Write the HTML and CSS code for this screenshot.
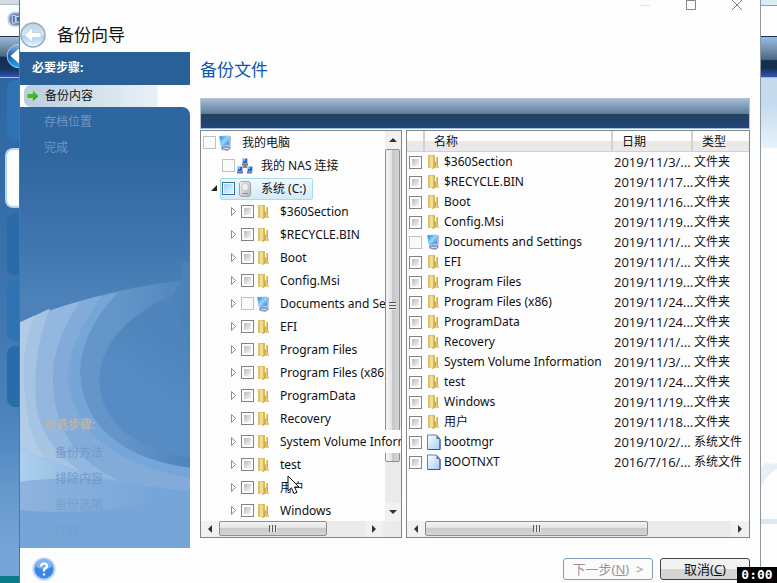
FILE: index.html
```html
<!DOCTYPE html>
<html lang="zh-CN">
<head>
<meta charset="utf-8">
<title>备份向导</title>
<link rel="stylesheet" href="styles.css">
</head>
<body>
<svg class="sprites" aria-hidden="true">
  <defs>
    <linearGradient id="paper" x1="0" y1="0" x2="1" y2="1"><stop offset="0" stop-color="#fff"/><stop offset="1" stop-color="#a4ccf8"/></linearGradient>
    <linearGradient id="screen" x1="0" y1="0" x2="1" y2="1"><stop offset="0" stop-color="#2d78dc"/><stop offset=".5" stop-color="#8fdcff"/><stop offset="1" stop-color="#2d6fdb"/></linearGradient>
    <linearGradient id="metal" x1="0" x2="1" y2="1"><stop offset="0" stop-color="#fff"/><stop offset="1" stop-color="#aeb0b2"/></linearGradient>
    <linearGradient id="glass" x2="0" y2="1"><stop offset="0" stop-color="#b9d2e4"/><stop offset=".5" stop-color="#d6e8f4"/><stop offset=".55" stop-color="#a9d3ee"/><stop offset="1" stop-color="#eaf8ff"/></linearGradient>
    <linearGradient id="deep" x2="0" y2="1"><stop offset="0" stop-color="#8fc0ee"/><stop offset=".5" stop-color="#1b5cb0"/><stop offset="1" stop-color="#22b4f4"/></linearGradient>
    <symbol id="folder" viewBox="0 0 16 16"><path d="M2 1h6v13H2z" fill="#dfc26c"/><path d="M4 2h4v12H4z" fill="#f0dc92"/><path d="M7 1h2v10l-2 3z" fill="#d8b95c"/><path d="M9 7h1V3h2v9h1v2H9l-3 1v-1l2-3z" fill="#e6ca74"/><path d="M9 8v4l-2 2.500" fill="none" stroke="#b8953a"/><path d="M11.500 3v9" fill="none" stroke="#cfac4c"/></symbol>
    <symbol id="pc" viewBox="0 0 16 16"><path d="M4 11h7l2 2-3 2.700-6-.7-1-2z" fill="#8791bd"/><path d="M10 1l3 .5-.5 10-2.500 1z" fill="#a7afd0"/><path d="M1 1l10-.5.500 9.500L3 12z" fill="#a9c4ee"/><path d="M1.500 1.500l9-.5.500 8.500-8 1.500z" fill="url(#screen)"/><path d="M5 14l3-1 3 1" fill="none" stroke="#e1e5f5"/></symbol>
    <symbol id="nas" viewBox="0 0 16 16"><path d="M8 5v5M4 10l4-2 5 2" fill="none" stroke="#a78a2c" stroke-width="2"/><path d="M5 0h6v6H5zM0 8h6v6H0zM10 8h6v6h-6z" fill="#b9c8e7"/><path d="M6 1h4v4H6zM1 9h4v4H1zM11 9h4v4h-4z" fill="#2867cf"/><path d="M5 6.500h6M0 14.500h6M10 14.500h5" stroke="#66779f" stroke-width="2"/><path d="M6 1h2v2H6zM1 9h2v2H1zM11 9h2v2h-2z" fill="#6fc0ff"/></symbol>
    <symbol id="disk" viewBox="0 0 16 16"><rect x="2.500" y=".5" width="11" height="15" rx="2.500" fill="url(#metal)" stroke="#a3a3a3"/><ellipse cx="8" cy="6" rx="3.500" ry="4" fill="#ededeb" stroke="#c2c4c4"/><path d="M5 12.500h6" stroke="#8f9395"/></symbol>
    <symbol id="file" viewBox="0 0 16 16"><path d="M1.500 1h9L14 5v10.500H1.500z" fill="url(#paper)" stroke="#637eb8"/><path d="M10.500 1v4H14z" fill="#526da9"/><path d="M14 5v10.500H2" fill="none" stroke="#464f91"/></symbol>
  </defs>
</svg>
<div class="desktop">
  <aside class="behind behind-left" aria-hidden="true">
    <div class="b-title"></div>
    <div class="b-app"><svg viewBox="0 0 20 32"><rect x="9" y="8" width="18" height="14" rx="6" fill="#6b89b2" stroke="#bccbdc" stroke-width="2"/><path d="M13 11h3v8h-3zM17 12h5v6h-5z" fill="#466d9f" stroke="#d9e8f5"/></svg></div>
    <div class="b-nav"><svg viewBox="0 0 20 42"><circle cx="20" cy="20" r="12.500" fill="url(#deep)" stroke="#b4c8e7"/><path d="M11 20l9-8v16z" fill="#fff"/></svg></div>
    <div class="b-side">
      <div class="b-tab t1"></div><div class="b-tab t2"></div><div class="b-tab t3"></div><div class="b-tab t4"></div><div class="b-tab t5"></div>
    </div>
    <div class="b-task"></div>
  </aside>

  <main class="dialog">
    <header class="top">
      <div class="window-buttons">
        <button type="button" aria-label="最小化"><svg viewBox="0 0 12 12"><path d="M1 6.500h10" stroke="#e4e4e4"/></svg></button>
        <button type="button" aria-label="最大化"><svg viewBox="0 0 12 12"><path d="M1.500 1.500h9v9h-9z" fill="none" stroke="#858585"/></svg></button>
        <button type="button" aria-label="关闭"><svg viewBox="0 0 12 12"><path d="M1 1l10 10M11 1L1 11" stroke="#808080"/></svg></button>
      </div>
      <div class="wizard">
        <button class="back" type="button" aria-label="后退"><svg viewBox="0 0 26 26"><circle cx="13" cy="13" r="12" fill="url(#glass)" stroke="#98a9b8" stroke-width="1.500"/><path d="M4.500 13l8-7.500v5h8.500v5h-8.500v5z" fill="#fff" stroke="#c2d6e4"/></svg></button>
        <h1>备份向导</h1>
      </div>
    </header>

    <div class="body">
      <nav class="steps" aria-label="步骤">
        <svg class="swoosh" viewBox="0 0 170 495" preserveAspectRatio="none" aria-hidden="true">
          <defs>
            <linearGradient id="fade" x1="0" x2="1" y1="0" y2="0"><stop offset="0" stop-color="#6798cb"/><stop offset=".6" stop-color="#6495c9"/><stop offset="1" stop-color="#4d84bc"/></linearGradient>
            <linearGradient id="ray" x1="0" x2="1"><stop offset="0" stop-color="#acd0ee"/><stop offset=".5" stop-color="#8ab1de"/><stop offset="1" stop-color="#83acdb"/></linearGradient>
            <linearGradient id="mist" x1="0" x2="1"><stop offset="0" stop-color="#8fb3de"/><stop offset="1" stop-color="#78a6d8"/></linearGradient>
            <linearGradient id="core" gradientUnits="userSpaceOnUse" x1="100" y1="360" x2="150" y2="290"><stop offset=".4" stop-color="#568bc4"/><stop offset="1" stop-color="#4f85bc"/></linearGradient>
          </defs>
          <path d="M0 270Q70 239 162 228Q158 240 150 250L170 300V495H0z" fill="url(#fade)"/>
          <path d="M0 270Q44 250 98 240Q60 280 60 321Q66 400 170 415V495H0z" fill="#76a6d8"/>
          <path d="M0 270Q36 254 82 243Q48 290 48 326Q56 405 170 425V495H0z" fill="#82abda"/>
          <path d="M0 270Q26 258 60 249Q30 295 33 330Q35 400 100 428H0z" fill="#93b7df"/>
          <path d="M0 270L30 256Q12 300 16 350Q20 390 60 418H0z" fill="#a5c3e3"/>
          <path d="M0 270L15 263Q-2 300 6 350Q8 380 24 405H0z" fill="#b2cce8"/>
          <path d="M153 242Q79 276 79 330Q84 390 170 405V228z" fill="url(#core)"/>
          <path d="M170 210V300L153 242L162 228V210z" fill="#4b82ba"/>
          <path d="M0 396Q70 430 170 438V495H0z" fill="#76a5d8"/>
          <path d="M0 396Q70 430 170 438Q90 428 0 430z" fill="url(#ray)"/>
          <path d="M0 429Q55 422 115 430Q150 445 110 454Q45 462 0 457z" fill="url(#mist)"/>
        </svg>
        <section class="required">
          <h2>必要步骤:</h2>
          <ol>
            <li class="current"><svg viewBox="0 0 14 14"><path d="M1 4.500h5.500V1L13 7l-6.500 6V9.500H1z" fill="#45b82d" stroke="#b9d5b4"/><path d="M7 11l4-4" stroke="#1f7e19"/></svg><span>备份内容</span></li>
            <li>存档位置</li>
            <li>完成</li>
          </ol>
        </section>
        <section class="optional">
          <h2>可选步骤:</h2>
          <ol><li>备份方法</li><li>排除内容</li><li>备份选项</li><li>注释</li></ol>
        </section>
      </nav>

      <section class="content">
        <h2 class="heading">备份文件</h2>
        <div class="toolbar"></div>
        <div class="panes">
          <div class="pane tree-pane">
            <ul class="tree" id="tree"></ul>
            <div class="vbar"><button type="button" class="up" aria-label="向上"></button><div class="thumb"></div><button type="button" class="down" aria-label="向下"></button></div>
            <div class="hbar"><button type="button" class="left" aria-label="向左"></button><div class="track"><div class="thumb short"></div></div><button type="button" class="right" aria-label="向右"></button></div>
          </div>
          <div class="pane list-pane">
            <table>
              <colgroup><col class="c-check"><col><col class="c-date"><col class="c-type"></colgroup>
              <thead><tr><th></th><th>名称</th><th>日期</th><th>类型</th></tr></thead>
              <tbody id="files"></tbody>
            </table>
            <div class="hbar"><button type="button" class="left" aria-label="向左"></button><div class="track"><div class="thumb long"></div></div><button type="button" class="right" aria-label="向右"></button></div>
          </div>
        </div>
      </section>
    </div>

    <footer>
      <button class="help" type="button" aria-label="帮助"><svg viewBox="0 0 24 24"><circle cx="12" cy="12" r="10.500" fill="#3b86e6" stroke="#b9d3f2" stroke-width="2"/><path d="M4 10a8 8 0 0 1 16 0q-8 4-16 0" fill="#7db4f4"/><path d="M9 9.500q0-3 3-3t3 2.500q0 2-3 3.500v2M12 16.500v2" fill="none" stroke="#fff" stroke-width="2.200"/></svg></button>
      <button class="action" type="button" disabled>下一步(<u>N</u>)&nbsp; &gt;</button>
      <button class="action cancel" type="button">取消(<u>C</u>)</button>
    </footer>
  </main>

  <aside class="behind behind-right" aria-hidden="true">
    <div class="r-title"></div><div class="r-app"></div><div class="r-nav"></div><div class="r-sky"></div>
    <div class="r-line"><svg viewBox="0 0 16 30"><path d="M0 9Q5 1 9 5L16 4V10Q5 16 0 28z" fill="#e8f0f7"/></svg></div>
    <div class="r-card"></div>
  </aside>
  <svg class="pointer" viewBox="0 0 14 20" aria-hidden="true"><path d="M1 1v15l3.500-3.200L7 18.500l3-1.200-2.500-5.300H12z" fill="#fff" stroke="#111"/></svg>
  <div class="timer">0:00</div>
</div>
<script src="app.js"></script>
</body>
</html>
```

FILE: styles.css
```css
* { box-sizing: border-box; }
body, h1, h2, ul, ol { margin: 0; padding: 0; }
body { font: 12px/20px "Noto Sans", "Noto Sans CJK SC", sans-serif; color: #111; background: #fdfdfd; }
ul, ol { list-style: none; }
button { font: inherit; padding: 0; border: 0; background: none; }
svg { display: block; }
.sprites { position: absolute; width: 0; height: 0; }
.desktop { position: relative; display: grid; grid-template-columns: 20px minmax(0, 1fr) 17px; height: 100vh; overflow: hidden; }

.behind { display: flex; flex-direction: column; min-height: 0; overflow: hidden; }
.behind-left { border-right: 1px solid #5d7488; background: #fdfdfd; }
.b-title { height: 5px; background: #d5dce1; border-bottom: 1px solid #a9bbc7; }
.b-app { height: 31px; }
.b-nav { height: 42px; border-top: 1px solid #173452; border-bottom: 1px solid #a4c2ed; background: linear-gradient(#a0bad8, #49677f 48%, #142f4e 50%, #15345d 80%, #3452b5); }
.b-side { flex: 1; display: flex; flex-direction: column; background: linear-gradient(#2d66a0, #3a73ae 40%, #4b81ba 65%, #568cc5 75%, #6698cb 83%, #75a5d8 94%); }
.b-tab { margin-left: 7px; border-radius: 8px 0 0 8px; background: #2e73b1; }
.t1 { height: 60px; margin-top: 2px; }
.t2 { height: 60px; margin: 8px 0 0 5px; background: #fdfdfd; border: 2px solid #b4d7ef; border-right: 0; }
.t3 { height: 61px; margin-top: 6px; background: #2b6aa8; }
.t4 { height: 61px; margin-top: 5px; }
.t5 { height: 61px; margin-top: 5px; background: #296cab; }
.b-task { height: 7px; background: #087a88; }
.behind-right { border-left: 1px solid #8e98a2; }
.r-title { height: 6px; background: #d9ebf3; border-bottom: 1px solid #999; }
.r-app { height: 30px; }
.r-nav { height: 42px; border-top: 1px solid #142e50; border-bottom: 1px solid #9cb8e1; background: linear-gradient(#97bbe4, #7d98b7 25%, #496981 56%, #142f4d 59%, #142f4d 78%, #3556bc); }
.r-sky { height: 70px; background: linear-gradient(#c5daea, #c6dcef 40%, #e8f3fa); }
.r-line { display: flex; align-items: flex-end; height: 376px; padding-bottom: 30px; border-bottom: 5px solid #dce9f3; }
.r-line svg { width: 16px; height: 30px; }
.r-card { flex: 1; }

.dialog { display: flex; flex-direction: column; min-width: 0; min-height: 0; background: #fdfdfd; }
.top { position: relative; height: 52px; padding-top: 21px; }
.window-buttons { position: absolute; top: -1px; right: 17px; display: flex; gap: 34px; }
.window-buttons svg { width: 12px; height: 12px; }
.wizard { display: flex; align-items: center; gap: 11px; height: 28px; }
.back svg { width: 26px; height: 26px; }
.wizard h1, .heading { font-size: 17px; font-weight: 400; line-height: 28px; }
.body { flex: 1; display: grid; grid-template-columns: 170px minmax(0, 1fr); min-height: 0; }
.steps { position: relative; display: flex; flex-direction: column; justify-content: space-between; background: linear-gradient(#2c629b, #2e669f 20%, #3a70ab 33%, #457bb3 43%, #4c82b9 50%, #5187bd); }
.swoosh { position: absolute; top: 0; left: 0; width: 100%; height: 100%; }
.required, .optional { position: relative; }
.required h2, .optional h2 { font-size: 12px; line-height: 18px; }
.required h2 { height: 33px; padding: 7px 12px; color: #fff; background: #2a6098; border-radius: 0 0 8px 0; }
.required ol { background: #fdfdfd; }
.required li { height: 26px; padding: 2px 0 0 24px; line-height: 26px; color: #7297bf; background: #2e669f; }
.required li.current { display: flex; align-items: center; gap: 5px; height: 22px; margin-left: 4px; padding: 0 0 0 2px; color: #111; background: linear-gradient(90deg, #b9cee2, #d8e5ed 50%, #e8f0f7 80%, #fdfdfd 81%); border-radius: 7px 0 0 7px; }
.current svg { width: 14px; height: 14px; }
.required li:nth-child(2) { border-radius: 0 8px 0 0; }
.optional { padding: 0 0 4px 24px; }
.optional h2 { margin-bottom: 6px; color: #b9b5ae; }
.optional li { padding-left: 11px; height: 26px; line-height: 26px; color: #6d96c6; opacity: .85; }
.optional li:nth-child(3) { opacity: .6; }
.optional li:last-child { opacity: .4; }

.content { display: flex; flex-direction: column; min-width: 0; min-height: 0; padding: 4px 10px 10px; }
.heading { color: #0b57ad; }
.toolbar { height: 31px; flex: none; margin-top: 14px; border: 1px solid #b4c4d4; border-bottom-color: #9bbcdf; background: linear-gradient(#a4bdd7, #607d9a 50%, #23415f 51%, #23457a); }
.panes { flex: 1; display: grid; grid-template-columns: 202px minmax(0, 1fr); gap: 4px; min-height: 0; margin-top: 1px; }
.pane { display: grid; min-width: 0; min-height: 0; border: 1px solid #858585; background: #fdfdfd; grid-template-rows: minmax(0, 1fr) 16px; }
.tree-pane { grid-template-columns: minmax(0, 1fr) 16px; }
.tree { min-height: 0; }
.tree li { display: flex; align-items: center; height: 23px; padding-left: 29px; overflow: hidden; white-space: nowrap; }
.tree li.root { padding-left: 2px; }
.tree li.level1 { padding-left: 10px; }
.tree li.over { position: relative; margin-right: -16px; background: #fdfdfd; }
.arrow { flex: none; width: 11px; height: 9px; }
.node { display: flex; align-items: center; height: 23px; }
.tree .icon { margin: 0 8px 0 2px; }
.selected .node { height: 22px; padding: 0 6px 0 1px; margin-left: -2px; border: 1px solid #a5dcf2; border-radius: 2px; background: linear-gradient(#f0f9fd, #d3ebf8); }
.icon { flex: none; width: 16px; height: 16px; }
input { display: block; appearance: none; flex: none; width: 13px; height: 13px; margin: 0; border: 1px solid #808284; background: linear-gradient(135deg, #b6bcc6, #f6f6f6) 50% / 7px 7px no-repeat, #fdfdfd; }
input.plain { border-color: #c1c1c1; background: #fafafa; }
.selected input { border-color: #32749f; background: linear-gradient(135deg, #9bd4f5, #e3f5fd) 50% / 9px 9px no-repeat, #fff; }

.vbar { display: grid; grid-template-rows: 18px 313px 1fr; background: #ebebeb; }
.vbar .thumb, .hbar .thumb { display: flex; align-items: center; justify-content: center; border: 1px solid #8e8e8e; border-radius: 2px; background: linear-gradient(90deg, #f4f4f4, #e3e3e3 45%, #c7c8ca 50%, #d5d5d6); }
.vbar .thumb { width: 15px; }
.vbar .thumb::after { content: ""; width: 7px; height: 8px; background: repeating-linear-gradient(#555 0 1px, #e8e8e8 1px 3px); }
.vbar button, .hbar button { display: grid; place-items: center; background: #f1f1f1; }
.vbar .down { align-self: end; height: 18px; }
.vbar button::after, .hbar button::after { content: ""; border: 4px solid transparent; }
.vbar .up::after { border-top: 0; border-bottom-color: #333; }
.vbar .down::after { border-bottom: 0; border-top-color: #333; }
.hbar { grid-column: 1 / -1; display: grid; grid-template-columns: 18px minmax(0, 1fr) 18px; background: #ebebeb; }
.tree-pane .hbar { padding-right: 18px; }
.hbar .left::after { border-left: 0; border-right-color: #333; }
.hbar .right::after { border-right: 0; border-left-color: #333; }
.hbar .thumb { height: 15px; background: linear-gradient(#f4f4f4, #e4e4e4 45%, #c9cacc 50%, #d4d5d6); }
.hbar .thumb::after { content: ""; width: 8px; height: 7px; background: repeating-linear-gradient(90deg, #555 0 1px, #e8e8e8 1px 3px); }
.hbar .short { width: 74%; }
.hbar .long { width: 73%; }

table { align-self: start; width: 100%; table-layout: fixed; border-collapse: separate; border-spacing: 0; }
.c-check { width: 18px; }
.c-date { width: 80px; }
.c-type { width: 56px; }
th { height: 21px; padding: 2px 9px 0; border-right: 2px solid #d2d2d2; border-bottom: 1px solid #d0d0d0; background: linear-gradient(#fdfdfd 50%, #e9e9e9 50%); font-weight: 400; line-height: 18px; text-align: left; }
th:first-child { padding: 0; }
th:last-child { border-right: 0; }
td { height: 20px; padding: 0 0 0 1px; line-height: 20px; white-space: nowrap; }
td:first-child { padding-left: 2px; }
td label { display: flex; align-items: center; gap: 2px; }
.date { font-family: "Open Sans", sans-serif; font-size: 13px; }

footer { display: flex; align-items: center; gap: 7px; height: 35px; padding: 0 10px 0 12px; }
.help { margin-right: auto; margin-top: 7px; }
.help svg { width: 24px; height: 24px; }
.action { width: 90px; height: 22px; margin-top: 7px; border: 1px solid #426d92; border-radius: 3px; font-size: 13px; line-height: 20px; color: #111; background: #fbfbfb; }
.action:disabled { color: #969696; border-color: #7f9db9; }
.cancel { border-color: #444; background: linear-gradient(#f2f2f2 50%, #d5d5d5 50%); }

.pointer { position: absolute; left: 287px; top: 475px; width: 14px; height: 20px; }
.timer { position: absolute; right: 0; bottom: 0; width: 40px; height: 16px; background: #000; color: #fff; font: bold 13px/16px "DejaVu Sans Mono", monospace; text-align: center; }
```

FILE: app.js
```js
const names = ["$360Section", "$RECYCLE.BIN", "Boot", "Config.Msi", "Documents and Settings", "EFI", "Program Files", "Program Files (x86)", "ProgramData", "Recovery", "System Volume Information", "test"];
const iconFor = name => name.startsWith("Documents") ? "pc" : "folder";
const icon = id => `<svg class="icon" aria-hidden="true"><use href="#${id}"/></svg>`;
const arrow = open => `<svg class="arrow" viewBox="0 0 11 9">${open ? '<path d="M6 1v6H0z" fill="#222"/>' : '<path d="M1.500 .5l4 4-4 4z" fill="#fff" stroke="#8c8c8c"/>'}</svg>`;

const nodes = [
  { name: "我的电脑", icon: "pc", cls: "root", plain: true, twisty: "" },
  { name: "我的 NAS 连接", icon: "nas", cls: "level1", plain: true, twisty: '<span class="arrow"></span>' },
  { name: "系统 (C:)", icon: "disk", cls: "level1 selected", twisty: arrow(true) },
  ...[...names, "用户", "Windows"].map(name => ({
    name, icon: iconFor(name), plain: iconFor(name) === "pc", twisty: arrow(false),
    cls: name.startsWith("System") ? "over" : ""
  }))
];
document.getElementById("tree").innerHTML = nodes.map((n, i) =>
  `<li class="${n.cls}">${n.twisty}<span class="node"><input type="checkbox" id="n${i}" class="${n.plain ? "plain" : ""}">${icon(n.icon)}<label for="n${i}">${n.name}</label></span></li>`).join("");

const dates = ["11/3/...", "11/17...", "11/16...", "11/19...", "11/1/...", "11/1/...", "11/19...", "11/24...", "11/24...", "11/1/...", "11/3/...", "11/24...", "11/19...", "11/18..."].map(d => "2019/" + d);
const files = [...names, "Windows", "用户"].map((name, i) => [name, dates[i], "文件夹", iconFor(name)]);
files.push(["bootmgr", "2019/10/2/...", "系统文件", "file"], ["BOOTNXT", "2016/7/16/...", "系统文件", "file"]);
document.getElementById("files").innerHTML = files.map(([name, date, type, ic], i) =>
  `<tr><td><input type="checkbox" id="f${i}" aria-label="${name}" class="${ic === "pc" ? "plain" : ""}"></td><td><label for="f${i}">${icon(ic)}<span>${name}</span></label></td><td class="date">${date}</td><td>${type}</td></tr>`).join("");
```
